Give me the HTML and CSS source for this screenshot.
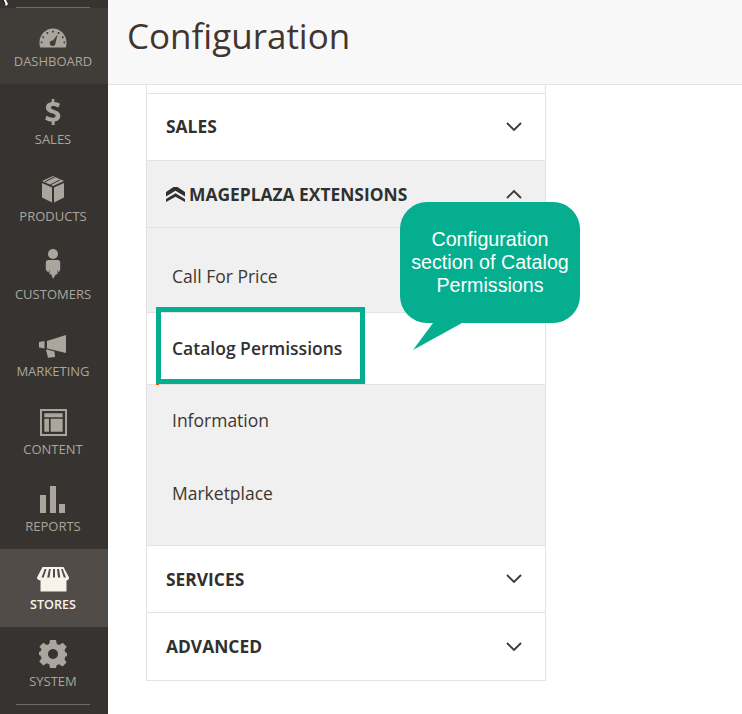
FILE: index.html
```html
<!DOCTYPE html>
<html lang="en">
<head>
<meta charset="utf-8">
<title>Configuration</title>
<link rel="stylesheet" href="styles.css">
</head>
<body>
<div class="app">
  <svg class="cursor" viewBox="0 0 8 6" width="8" height="6"><path d="M3 0h3l2 4-2 2-1-2z" fill="#fff"/><path d="M3 0l2 4" stroke="#000" fill="none"/></svg>
  <nav class="sidebar">
    <div class="rule"></div>
    <a class="nav-item dash">
      <svg class="ico" viewBox="0 0 30 21" width="28" height="20"><path fill-rule="evenodd" d="M1 20.500C.3 19 0 17 0 15 0 6.700 6.700 0 14.500 0S29 6.700 29 15c0 2-.3 4-1 5.500zM14.500 2.500a1 1 0 1 0 .01 0zM8.500 4a1 1 0 1 0 .01 0zM20.500 4a1 1 0 1 0 .01 0zM4 8.500a1 1 0 1 0 .01 0zM25 8.500a1 1 0 1 0 .01 0zM2.300 14a1 1 0 1 0 .01 0zM26.700 14a1 1 0 1 0 .01 0zM19.500 6.500l-5 6.500a3.200 3.200 0 0 0-3.500 3c0 1.900 1.500 3 3.200 3 2 0 3.300-1.700 3-3.500z" fill="#aaa69e" transform="translate(.5 .2)"/></svg>
      <span>DASHBOARD</span>
    </a>
    <a class="nav-item">
      <svg class="ico" viewBox="0 0 16 27" width="16" height="27"><path d="M6.700 0h2.600v3c2.200.2 4 .8 5.600 1.800l-1.300 3.700c-1.800-1-3.600-1.600-5.300-1.600-1.600 0-2.500.6-2.500 1.600 0 1.100 1.100 1.600 3.400 2.400 3.700 1.200 6.100 2.600 6.100 6 0 3-2.100 5.100-5.700 5.600V26H6.700v-3.400c-2.500-.2-4.800-1-6.500-2.200l1.400-3.700c2 1.300 4.200 2 6.100 2 1.800 0 2.900-.7 2.900-1.800 0-1.200-1.100-1.700-3.600-2.600C3.400 13 .9 11.600.9 8.400.9 5.600 3 3.600 6.700 3.100z" fill="#aaa69e"/></svg>
      <span>SALES</span>
    </a>
    <a class="nav-item">
      <svg class="ico" viewBox="0 0 24 27" width="24" height="27"><path d="M12 0l11 5-11 5L1 5z" fill="#aaa69e"/><path d="M4 5.700L14 .7M9 9l10-5" stroke="#373330" fill="none"/><path d="M1 7l10 4.500V26.500L1 21.500zM23 7l-10 4.500V26.500l10-5z" fill="#aaa69e"/></svg>
      <span>PRODUCTS</span>
    </a>
    <a class="nav-item">
      <svg class="ico" viewBox="0 0 16 32" width="16" height="32"><circle cx="8" cy="5" r="5" fill="#aaa69e"/><path d="M3.500 11h9c2 0 2.700 1 2.700 2.700V21l-1.700 2.500-1-3V25l-2 .8L8 30l-1.500-4.200-2-.8v-4.500l-1 3L.8 21v-7.300C.8 12 1.500 11 3.500 11z" fill="#aaa69e"/></svg>
      <span>CUSTOMERS</span>
    </a>
    <a class="nav-item">
      <svg class="ico" viewBox="0 0 28 23" width="28" height="23"><path d="M27 0v18L8 13.500l-.1-7.600zM0 7l5.500-1v7.500L0 12.500zM8 14.500l7.500 2 .5 5.500-7 .8-2-7.800z" fill="#aaa69e"/></svg>
      <span>MARKETING</span>
    </a>
    <a class="nav-item">
      <svg class="ico" viewBox="0 0 28 28" width="27" height="27"><path fill-rule="evenodd" d="M0 0h28v28H0zM2 2v24h24V2zM4.500 4.500h19v4h-19zM4.500 10h4.800v13.500H4.500zM11 10h12.500v13.500H11z" fill="#aaa69e"/></svg>
      <span>CONTENT</span>
    </a>
    <a class="nav-item">
      <svg class="ico" viewBox="0 0 26 27" width="26" height="27"><path d="M0 9h6v18H0zM10 0h6v27h-6zM19 18h6v9h-6z" fill="#aaa69e"/></svg>
      <span>REPORTS</span>
    </a>
    <a class="nav-item active">
      <svg class="ico" viewBox="0 0 32 25" width="32" height="25"><path fill-rule="evenodd" d="M5.500 0h21L32 10.500c.2 1.600-1 2.800-2.500 2.800v11.200H3.500V13.300C1.700 13.300-.2 12 0 10.500zM7.700 2L4.500 10.500h2.200L9.500 2zM12 2l-1.800 8.500h2.300L13.700 2zM16 2v8.500h2V2zM20 2l1 8.500h2.300L22 2zM24 2l2.800 8.500H29L25.700 2z" fill="#f7f3eb"/></svg>
      <span>STORES</span>
    </a>
    <a class="nav-item">
      <svg class="ico" viewBox="0 0 28 28" width="28" height="28"><path fill-rule="evenodd" d="M11 0h6l.8 4 2.500 1 3.400-2.200 4 4L25.500 10l1 2.500 1.500.5v3l-1.500.5-1 2.700 2 3.300-4 4-3.400-2.200-2.500 1L17 28h-6l-.8-3.700-2.500-1L4.300 25.500l-4-4 2.200-3.300-1-2.700L0 15v-3l1.500-.5 1-2.500L.3 6.800l4-4L7.700 5l2.500-1zM14 9a5 5 0 1 0 .01 0z" fill="#aaa69e"/></svg>
      <span>SYSTEM</span>
    </a>
    <div class="rule"></div>
  </nav>
  <main class="main">
    <header class="page-header"><h1>Configuration</h1></header>
    <section class="panel">
      <div class="section"><h2>SALES</h2>
        <svg class="chev" viewBox="0 0 16 10" width="16" height="10"><path d="M1 1l7 7 7-7" fill="none" stroke="#41362f" stroke-width="1.800"/></svg>
      </div>
      <div class="section open">
        <h2><svg class="mp" viewBox="0 0 19 15" width="19" height="15"><path d="M7.500 0h4L19 5v4.500L9.500 3.700 0 9.500V5zM9.500 6.200L19 12v3L9.500 9.700 0 15v-3z" fill="#303030"/></svg>MAGEPLAZA EXTENSIONS</h2>
        <svg class="chev" viewBox="0 0 16 10" width="16" height="10"><path d="M1 9l7-7 7 7" fill="none" stroke="#41362f" stroke-width="1.800"/></svg>
      </div>
      <ul class="links">
        <li class="first">Call For Price</li>
        <li class="current">Catalog Permissions</li>
        <li>Information</li>
        <li>Marketplace</li>
      </ul>
      <div class="section"><h2>SERVICES</h2>
        <svg class="chev" viewBox="0 0 16 10" width="16" height="10"><path d="M1 1l7 7 7-7" fill="none" stroke="#41362f" stroke-width="1.800"/></svg>
      </div>
      <div class="section"><h2>ADVANCED</h2>
        <svg class="chev" viewBox="0 0 16 10" width="16" height="10"><path d="M1 1l7 7 7-7" fill="none" stroke="#41362f" stroke-width="1.800"/></svg>
      </div>
    </section>
  </main>
  <div class="highlight"></div>
  <div class="callout">Configuration section of Catalog Permissions</div>
  <svg class="tail" viewBox="0 0 54 30" width="54" height="30"><path d="M20 0L0 27 49 0z" fill="#05ae8e"/></svg>
</div>
</body>
</html>
```
FILE: styles.css
```css
* { box-sizing: border-box; }
html, body { margin: 0; padding: 0; background: #fff; }
body { width: 742px; height: 714px; overflow: hidden; font-family: "Open Sans", sans-serif; color: #41362f; }
.app { position: relative; display: flex; width: 742px; height: 714px; overflow: hidden; }
.cursor { position: absolute; left: 0; top: 0; z-index: 5; }
.sidebar { width: 108px; flex: none; background: #373330; display: flex; flex-direction: column; padding-top: 7px; }
.rule { height: 1px; margin: 0 18px 0 16px; background: #736a63; flex: none; }
.nav-item { height: 77.500px; flex: none; display: flex; flex-direction: column; align-items: center; justify-content: flex-end; padding: 0 2px 15px 0; color: #aaa69e; font-size: 13px; line-height: 16px; }
.nav-item span { display: block; margin-top: 5px; }
.ico { display: block; }
.dash { background: #403c38; height: 76px; }
.active { background: #514c47; color: #f7f3eb; font-weight: 600; font-size: 12.600px; padding-bottom: 14px; }
.main { flex: 1; min-width: 0; }
.page-header { height: 85px; background: #f8f8f8; border-bottom: 1px solid #e3e3e3; padding: 13px 0 0 19px; }
.page-header h1 { margin: 0; font-size: 35px; line-height: 46px; font-weight: 400; color: #41362f; }
.panel { width: 400px; margin: -1px 0 0 38px; border: 1px solid #e3e3e3; padding-top: 8px; }
.section { height: 67px; border-top: 1px solid #e3e3e3; display: flex; align-items: center; justify-content: space-between; padding: 0 23px 0 19px; background: #fff; }
.section:last-child { height: 68px; }
.section h2 { margin: 0; font-size: 17.400px; font-weight: 700; color: #303030; display: flex; align-items: center; }
.section:first-child h2, .section:last-child h2 { margin-bottom: 2px; }
.open { background: #f0f0f0; }
.mp { margin-right: 4px; }
.links { list-style: none; margin: 0; padding: 0 0 16px; background: #f0f0f0; border-top: 1px solid #e3e3e3; }
.links li { height: 72.500px; display: flex; align-items: center; padding-left: 25px; font-size: 17.500px; color: #41362f; }
.links .first { height: 84px; padding-top: 12px; }
.links .current { height: 73px; background: #fff; border-top: 1px solid #e3e3e3; border-bottom: 1px solid #e3e3e3; font-weight: 600; color: #303030; position: relative; padding-bottom: 1px; }
.links .current + li { height: 71.500px; padding-bottom: 2px; }
.current::before { content: ""; position: absolute; left: 9px; bottom: -1px; width: 3px; height: 2px; background: #eb5202; }
.highlight { position: absolute; left: 156px; top: 307px; width: 209px; height: 77px; border: 5px solid #05ae8e; }
.callout { position: absolute; left: 400px; top: 202px; width: 180px; height: 121px; border-radius: 27px; background: #05ae8e; color: #fff; font-family: "Liberation Sans", sans-serif; font-size: 19.700px; line-height: 23px; text-align: center; padding: 26px 4px 0; }
.tail { position: absolute; left: 413px; top: 323px; }
```
